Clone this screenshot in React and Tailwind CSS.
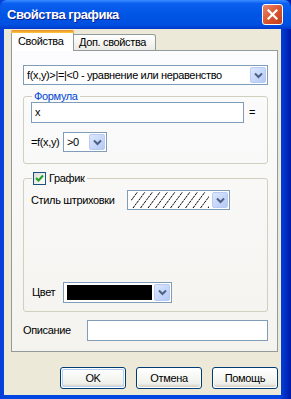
import React from "react";

const F = { fontFamily: '"Liberation Sans", Arial, sans-serif' };

function Chevron() {
  return (
    <svg width="9" height="7" viewBox="0 0 9 7">
      <path d="M1 1.5 L4.5 5 L8 1.5" fill="none" stroke="#4D6185" strokeWidth="2" />
    </svg>
  );
}

function DropBtn() {
  return (
    <div className="w-[16px] my-[1px] mr-[1px] flex items-center justify-center rounded-[2px] border border-[#B9CBF3] bg-[linear-gradient(135deg,#DCE7FE,#B5C9F6)]">
      <Chevron />
    </div>
  );
}

function Combo({ className, children }) {
  return (
    <div className={"flex border border-[#7F9DB9] bg-white " + className}>
      <div className="flex-1 flex items-center min-w-0">{children}</div>
      <DropBtn />
    </div>
  );
}

function Btn({ children, def }) {
  return (
    <div className="w-[66px] h-[22px] rounded-[3px] border border-[#003C74] p-[1px] bg-white">
      <div
        className={
          "w-full h-full rounded-[2px] flex items-center justify-center text-black bg-[linear-gradient(180deg,#FFFFFF,#F0F0EA_80%,#D6D0C5)] " +
          (def ? "shadow-[inset_0_0_0_1px_#B4D0F5]" : "")
        }
      >
        {children}
      </div>
    </div>
  );
}

function Hatch() {
  const lines = [];
  for (let i = -2; i < 12; i++) {
    const x = i * 7.5 + 2;
    lines.push(
      <line key={i} x1={x} y1={16} x2={x + 12} y2={0} stroke="#000" strokeWidth="1" strokeDasharray="2.5 0.7" />
    );
  }
  return (
    <svg width="78" height="16" viewBox="0 0 78 16" className="ml-[3px]">
      {lines}
    </svg>
  );
}

export default function App() {
  return (
    <div
      style={F}
      className="w-[291px] h-[399px] flex flex-col bg-[linear-gradient(90deg,#0A3FD8,#0046E0_3%,#0046E0_96%,#0019A8)] text-[11px] tracking-[-0.35px] text-black"
    >
      {/* Title bar */}
      <div className="h-[29px] flex items-center pl-[7px] pr-[8px] rounded-t-[7px] bg-[linear-gradient(180deg,#3A8CFF_0%,#0A5FF0_12%,#0055E5_50%,#0050E0_85%,#003ACD_100%)]">
        <div className="flex-1 text-white font-bold text-[13px] tracking-[-0.45px] [text-shadow:1px_1px_0_#0F1F8A]">
          Свойства графика
        </div>
        <div className="w-[21px] h-[21px] rounded-[3px] border border-white bg-[linear-gradient(135deg,#E8866A,#D8532E_55%,#C13E1C)] flex items-center justify-center">
          <svg width="11" height="11" viewBox="0 0 11 11">
            <path d="M1.5 1.5 L9.5 9.5 M9.5 1.5 L1.5 9.5" stroke="#fff" strokeWidth="2.2" strokeLinecap="square" />
          </svg>
        </div>
      </div>

      {/* Client area */}
      <div className="flex-1 ml-[4px] mr-[10px] mb-[4px] bg-[#ECE9D8] flex flex-col pl-[7px] pr-[3px] pt-[1px]">
        {/* Tabs */}
        <div className="flex items-end h-[21px] relative z-10 -mb-px">
          <div className="w-[63px] h-[21px] bg-white border-x border-[#919B9C] rounded-t-[3px] flex flex-col">
            <div className="h-[3px] rounded-t-[2px] bg-[linear-gradient(180deg,#E68B2C,#FFC73C)] -mx-px" />
            <div className="flex-1 flex items-center pl-[6px] pb-[1px]">Свойства</div>
          </div>
          <div className="w-[82px] h-[17px] border-t border-r border-[#919B9C] rounded-tr-[3px] bg-[linear-gradient(180deg,#FFFFFF,#ECEBE5)] flex items-center pl-[5px] border-b border-b-[#919B9C]">
            Доп. свойства
          </div>
        </div>

        {/* Panel */}
        <div className="h-[302px] border border-[#919B9C] bg-[linear-gradient(180deg,#FCFCFE,#F4F3EE)] pl-[11px] pt-[14px] flex flex-col">
          <Combo className="w-[245px] h-[20px]">
            <span className="pl-[3px] whitespace-nowrap">f(x,y)&gt;|=|&lt;0 - уравнение или неравенство</span>
          </Combo>

          <fieldset className="mt-[5px] w-[245px] h-[74px] border border-[#D0D0BF] rounded-[3px] px-[7px] pt-0 m-0">
            <legend className="ml-[1px] px-[2px] text-[#0046D5] leading-[13px]">Формула</legend>
            <div className="flex items-center -mt-[1px]">
              <div className="w-[213px] h-[21px] border border-[#7F9DB9] bg-white flex items-center pl-[3px]">x</div>
              <span className="ml-[5px]">=</span>
            </div>
            <div className="flex items-center mt-[9px]">
              <span className="w-[32px] whitespace-nowrap">=f(x,y)</span>
              <Combo className="w-[44px] h-[20px]">
                <span className="pl-[3px]">&gt;0</span>
              </Combo>
            </div>
          </fieldset>

          <fieldset className="mt-[8px] w-[245px] h-[140px] border border-[#D0D0BF] rounded-[3px] px-[7px] pt-0 m-0">
            <legend className="ml-[1px] px-[1px] leading-[13px] flex items-center">
              <span className="w-[13px] h-[13px] border border-[#1C5180] bg-[linear-gradient(135deg,#DCDCD7,#FFFFFF)] flex items-center justify-center">
                <svg width="9" height="9" viewBox="0 0 9 9">
                  <path d="M1 4 L3.5 6.5 L8 1.5" fill="none" stroke="#21A121" strokeWidth="2" />
                </svg>
              </span>
              <span className="ml-[3px] pr-[2px]">График</span>
            </legend>
            <div className="flex items-center mt-[5px]">
              <span className="w-[96px] whitespace-nowrap">Стиль штриховки</span>
              <Combo className="w-[103px] h-[20px]">
                <Hatch />
              </Combo>
            </div>
            <div className="flex items-center mt-[72px]">
              <span className="w-[32px] pl-[1px]">Цвет</span>
              <Combo className="w-[109px] h-[21px]">
                <div className="ml-[3px] w-[85px] h-[15px] bg-black" />
              </Combo>
            </div>
          </fieldset>

          <div className="flex items-center mt-[8px]">
            <span className="w-[64px]">Описание</span>
            <div className="w-[181px] h-[21px] border border-[#7F9DB9] bg-white" />
          </div>
        </div>

        {/* Buttons */}
        <div className="flex justify-end gap-[10px] mt-[15px]">
          <Btn def>OK</Btn>
          <Btn>Отмена</Btn>
          <Btn>Помощь</Btn>
        </div>
      </div>
    </div>
  );
}
